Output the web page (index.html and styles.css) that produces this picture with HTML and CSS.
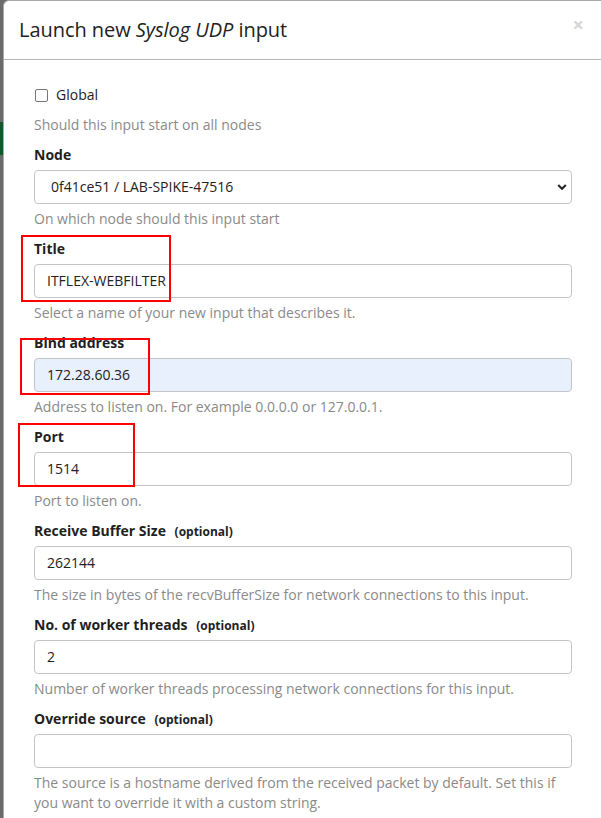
FILE: index.html
```html
<!DOCTYPE html>
<html>
<head>
<meta charset="utf-8">
<link rel="stylesheet" href="styles.css">
</head>
<body>
<div class="backdrop">
  <div class="bd-green"></div>
</div>
<div class="modal">
  <div class="modal-header">
    <h4 class="modal-title">Launch new <em>Syslog UDP</em> input</h4>
    <span class="close">×</span>
  </div>
  <div class="modal-body">
    <div class="checkbox-row">
      <span class="checkbox"></span>
      <span class="check-label">Global</span>
    </div>
    <div class="help first-help">Should this input start on all nodes</div>

    <div class="group">
      <label class="label">Node</label>
      <div class="control select">
        <span>0f41ce51 / LAB-SPIKE-47516</span>
        <svg class="chev" width="10" height="8" viewBox="0 0 10 8"><path d="M1.2 2 L5 5.8 L8.8 2" fill="none" stroke="#222" stroke-width="2"/></svg>
      </div>
      <div class="help">On which node should this input start</div>
    </div>

    <div class="group">
      <label class="label">Title</label>
      <div class="control">ITFLEX-WEBFILTER</div>
      <div class="help">Select a name of your new input that describes it.</div>
    </div>

    <div class="group">
      <label class="label">Bind address</label>
      <div class="control autofill">172.28.60.36</div>
      <div class="help">Address to listen on. For example 0.0.0.0 or 127.0.0.1.</div>
    </div>

    <div class="group">
      <label class="label">Port</label>
      <div class="control">1514</div>
      <div class="help">Port to listen on.</div>
    </div>

    <div class="group">
      <label class="label">Receive Buffer Size <small>(optional)</small></label>
      <div class="control">262144</div>
      <div class="help">The size in bytes of the recvBufferSize for network connections to this input.</div>
    </div>

    <div class="group">
      <label class="label">No. of worker threads <small>(optional)</small></label>
      <div class="control">2</div>
      <div class="help">Number of worker threads processing network connections for this input.</div>
    </div>

    <div class="group">
      <label class="label">Override source <small>(optional)</small></label>
      <div class="control"></div>
      <div class="help">The source is a hostname derived from the received packet by default. Set this if you want to override it with a custom string.</div>
    </div>
  </div>
</div>
<div class="mark mark-title"></div>
<div class="mark mark-bind"></div>
<div class="mark mark-port"></div>
</body>
</html>
```

FILE: styles.css
```css
html, body {
  margin: 0;
  padding: 0;
  width: 601px;
  height: 818px;
  overflow: hidden;
  background: #6b6b6b;
  font-family: "Open Sans", "Noto Sans", sans-serif;
  font-size: 14px;
  line-height: 20px;
  color: #1f1f1f;
}
body {
  position: relative;
}
.backdrop {
  position: absolute;
  left: 0;
  top: 0;
  width: 4px;
  height: 818px;
}
.bd-green {
  position: absolute;
  left: 0;
  top: 122px;
  width: 4px;
  height: 33px;
  background: #0c5a2c;
}
.modal {
  position: absolute;
  left: 3px;
  top: 0;
  width: 598px;
  height: 830px;
  background: #fff;
  border: 1px solid #a8a8a8;
  border-right: none;
  border-bottom: none;
  border-top-left-radius: 6px;
  box-sizing: border-box;
}
.modal-header {
  height: 59px;
  box-sizing: border-box;
  padding: 15px 15px 0 15px;
  border-bottom: 1px solid #b5b5b5;
  display: flex;
  justify-content: space-between;
  align-items: flex-start;
}
.modal-title {
  margin: 0;
  font-size: 20px;
  font-weight: normal;
  line-height: 28px;
  color: #222;
  letter-spacing: -0.05px;
}
.modal-title em {
  font-style: italic;
}
.close {
  font-size: 20px;
  font-weight: bold;
  color: #d6d6d6;
  line-height: 18px;
  margin-top: 0;
  margin-right: 2px;
}
.modal-body {
  padding: 25px 29px 0 30px;
}
.checkbox-row {
  display: flex;
  align-items: center;
  height: 20px;
}
.checkbox {
  width: 11px;
  height: 11px;
  border: 1px solid #767676;
  border-radius: 2px;
  margin-left: 1px;
  margin-right: 8px;
  background: #fff;
}
.check-label {
  color: #222;
}
.help {
  color: #8a8a8a;
  margin-top: 5px;
  margin-bottom: 10px;
}
.first-help {
  margin-top: 10px;
  margin-bottom: 10px;
}
.label {
  display: block;
  height: 20px;
  font-weight: bold;
  margin-bottom: 5px;
  color: #1f1f1f;
}
.label small {
  font-size: 12px;
  line-height: 12px;
  margin-left: 5px;
  color: #222;
}
.control {
  height: 34px;
  box-sizing: border-box;
  border: 1px solid #c4c4c4;
  border-radius: 4px;
  padding: 6px 12px;
  color: #222;
  background: #fff;
  display: flex;
  align-items: center;
}
.control.select {
  padding-left: 16px;
  justify-content: space-between;
  padding-right: 4px;
}
.chev {
  display: block;
}
.control.autofill {
  background: #e8f0fe;
}
.mark {
  position: absolute;
  border: 2px solid #f00;
  box-sizing: border-box;
}
.mark-title {
  left: 21px;
  top: 235px;
  width: 150px;
  height: 67px;
}
.mark-bind {
  left: 20px;
  top: 338px;
  width: 130px;
  height: 57px;
}
.mark-port {
  left: 18px;
  top: 423px;
  width: 117px;
  height: 64px;
}
```
